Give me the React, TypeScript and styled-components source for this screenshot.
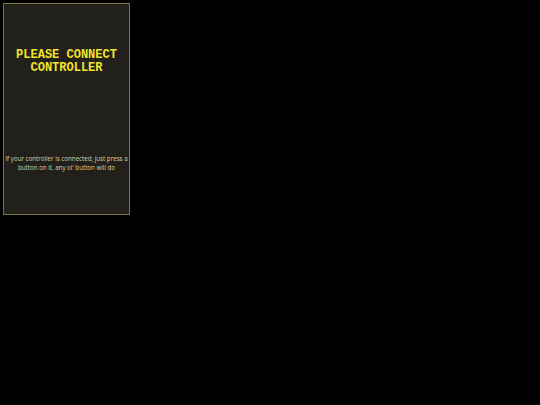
import React from "react";
import styled, { createGlobalStyle } from "styled-components";

const Global = createGlobalStyle`
  html, body {
    margin: 0;
    padding: 0;
    background: #000;
  }
  body {
    width: 540px;
    height: 405px;
    overflow: hidden;
  }
`;

const Screen = styled.div`
  padding: 3px;
`;

const Panel = styled.section`
  box-sizing: border-box;
  width: 127px;
  height: 212px;
  border: 1px solid #7a763c;
  background: #22201a;
  display: flex;
  flex-direction: column;
  align-items: center;
  padding: 45px 0 0;
`;

const Title = styled.h1`
  margin: 0;
  font-family: "Liberation Mono", "DejaVu Sans Mono", monospace;
  font-weight: 700;
  font-size: 12px;
  line-height: 13px;
  color: #f2e22a;
  text-align: center;
`;

const Hint = styled.p`
  margin: 79px 0 0;
  font-family: "Open Sans", "Noto Sans", sans-serif;
  font-size: 6.2px;
  line-height: 9px;
  color: #d9d1a2;
  text-align: center;
`;

export default function App() {
  return (
    <>
      <Global />
      <Screen>
        <Panel>
          <Title>
            PLEASE CONNECT
            <br />
            CONTROLLER
          </Title>
          <Hint>
            If your controller is connected, just press a button on it. any ol' button will do
          </Hint>
        </Panel>
      </Screen>
    </>
  );
}
